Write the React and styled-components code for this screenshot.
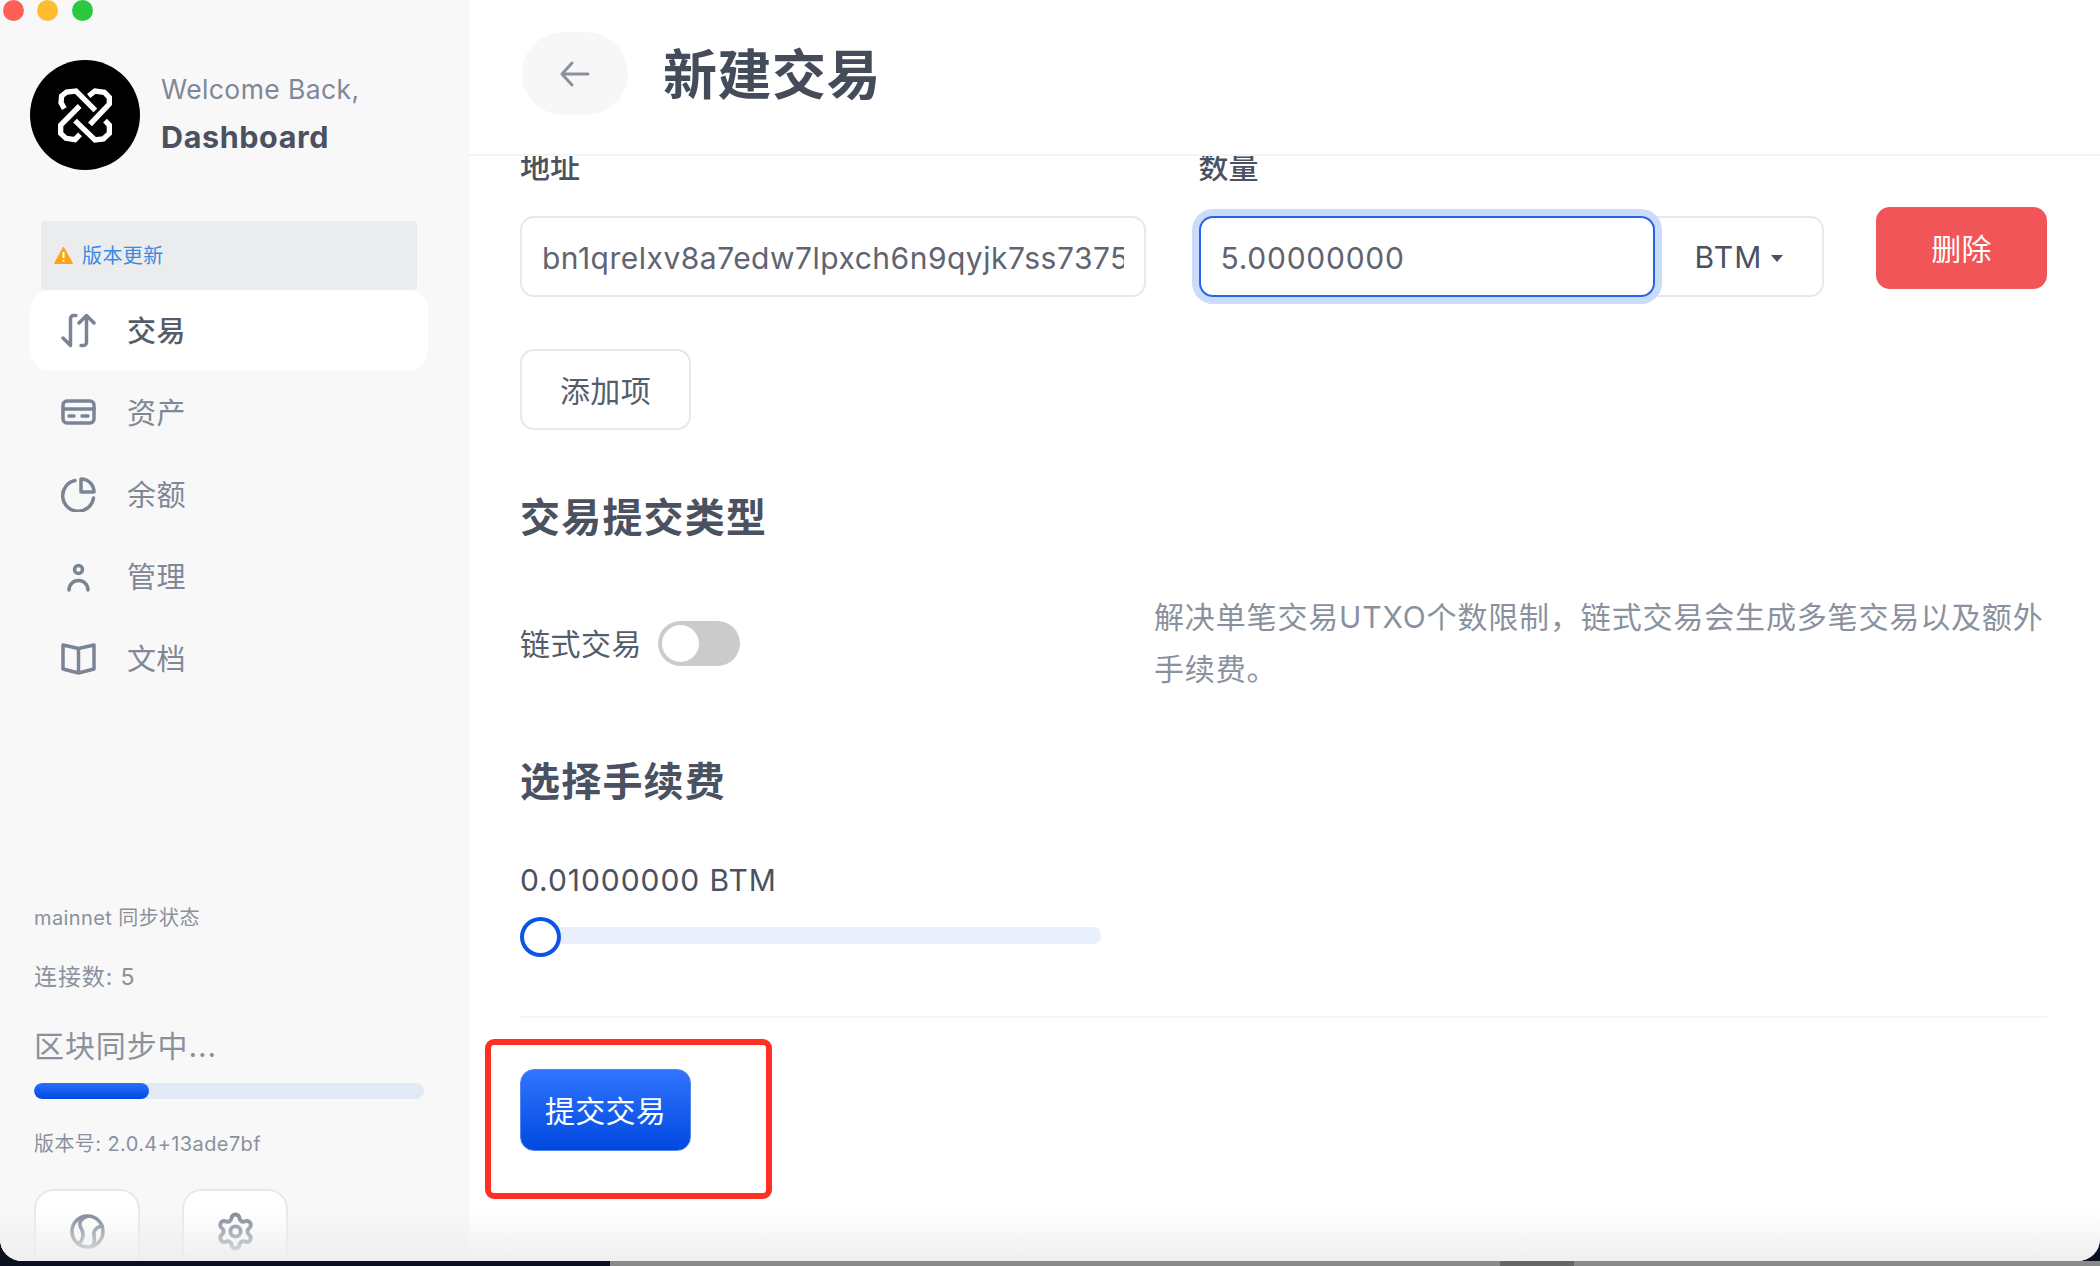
import React from "react";
import styled, { createGlobalStyle } from "styled-components";
import { Settings } from "lucide-react";

const GlobalStyle = createGlobalStyle`
  html, body {
    margin: 0;
    padding: 0;
    background: #0a1020;
  }
  body {
    width: 2100px;
    height: 1266px;
    overflow: hidden;
    font-family: Inter, "Noto Sans CJK SC", sans-serif;
    letter-spacing: 0.025em;
    color: #4a5160;
  }
  * {
    box-sizing: border-box;
  }
`;

const Window = styled.div`
  position: relative;
  display: flex;
  height: 1261px;
  overflow: hidden;
  background: #fff;
  border-radius: 0 0 22px 22px;

  &::after {
    content: "";
    position: absolute;
    left: 0;
    right: 0;
    bottom: 0;
    height: 52px;
    pointer-events: none;
    background: linear-gradient(rgba(238, 238, 238, 0), rgba(238, 238, 238, 0.95));
  }
`;

const Dock = styled.div`
  display: flex;
  height: 5px;
  background: #8a8a8a;
`;

const DockPart = styled.div`
  width: ${(p) => p.$width}px;
  background: ${(p) => p.$color};
`;

const Sidebar = styled.aside`
  flex: 0 0 469px;
  display: flex;
  flex-direction: column;
  background: #f8f8f9;

  & > * {
    flex: none;
  }
`;

const Lights = styled.div`
  display: flex;
  gap: 13.5px;
  margin-left: 2.5px;
`;

const Light = styled.span`
  width: 21px;
  height: 21px;
  border-radius: 50%;
  background: ${(p) => p.$color};
`;

const Brand = styled.div`
  display: flex;
  align-items: center;
  gap: 21px;
  margin: 39px 0 0 30px;
`;

const BrandText = styled.div`
  display: flex;
  flex-direction: column;
  gap: 8px;
  padding-bottom: 4px;
`;

const Welcome = styled.div`
  font-size: 26.5px;
  line-height: 40px;
  color: #7f8896;
`;

const BrandName = styled.div`
  font-size: 30.5px;
  line-height: 40px;
  font-weight: 700;
  letter-spacing: 0.02em;
  color: #4a5160;
`;

const UpdateBanner = styled.div`
  display: flex;
  align-items: center;
  gap: 9px;
  height: 69px;
  margin: 51px 52px 0 41px;
  padding: 0 0 2px 13px;
  border-radius: 4px;
  background: #ebecee;
  font-size: 20px;
  color: #3b8ae0;
`;

const Nav = styled.nav`
  display: flex;
  flex-direction: column;
  gap: 1px;
`;

const NavItem = styled.div`
  display: flex;
  align-items: center;
  gap: 31px;
  height: 81px;
  margin: 0 41px 0 30px;
  padding-left: 31px;
  border-radius: 20px;
  background: ${(p) => (p.$active ? "#fff" : "transparent")};
  color: ${(p) => (p.$active ? "#555c6a" : "#808896")};
  font-size: 29px;
  font-weight: ${(p) => (p.$active ? 500 : 400)};
`;

const NavLabel = styled.span`
  padding-bottom: 4px;
`;

const NavIcon = styled.svg`
  flex: none;
  width: 35px;
  height: 35px;
  fill: none;
  stroke: #7a8494;
  stroke-width: 3.5;
  stroke-linecap: round;
  stroke-linejoin: round;
`;

const StatusBlock = styled.div`
  display: flex;
  flex-direction: column;
  margin: 204px 45px 0 34px;
  color: #8a919e;
`;

const StatusSmall = styled.div`
  font-size: 20px;
  line-height: 30px;
  margin-top: ${(p) => p.$top || 0}px;
`;

const StatusMedium = styled.div`
  font-size: 23px;
  line-height: 30px;
  margin-top: 29px;
  letter-spacing: 0.9px;
`;

const SyncTitle = styled.div`
  font-size: 30px;
  line-height: 40px;
  margin-top: 34px;
  letter-spacing: 0.9px;
`;

const Progress = styled.div`
  height: 16px;
  margin-top: 17px;
  border-radius: 8px;
  overflow: hidden;
  background: #e3e9f5;
`;

const ProgressFill = styled.div`
  height: 100%;
  border-radius: 8px;
  background: linear-gradient(#2a6ffb, #0048e0);
`;

const ToolRow = styled.div`
  display: flex;
  gap: 42px;
  margin: 30px 0 0 34px;
`;

const ToolButton = styled.button`
  display: flex;
  align-items: center;
  justify-content: center;
  flex: none;
  width: 106px;
  height: 84px;
  padding: 0;
  background: #fff;
  border: 2px solid #e9e9ec;
  border-radius: 20px;
  color: #7a8494;
`;

const Main = styled.main`
  position: relative;
  flex: 1;
  display: flex;
  flex-direction: column;
  min-width: 0;
`;

const Header = styled.header`
  flex: 0 0 156px;
  display: flex;
  align-items: flex-start;
  gap: 35px;
  padding: 32px 0 0 53px;
  border-bottom: 2px solid #f5f5f6;
`;

const BackButton = styled.button`
  display: flex;
  align-items: center;
  justify-content: center;
  width: 106px;
  height: 83px;
  padding: 0;
  border: 0;
  border-radius: 44px;
  background: #f7f7f8;
`;

const Title = styled.h1`
  margin: 0;
  font-size: 54px;
  line-height: 88px;
  font-weight: 700;
  letter-spacing: 0.5px;
  color: #454c59;
`;

const Body = styled.div`
  flex: 1;
  overflow: hidden;
  padding: 0 53px 0 51px;
`;

const ItemRow = styled.div`
  display: grid;
  grid-template-columns: 626px 625px 171px;
  column-gap: 52.5px;
`;

const Field = styled.div`
  display: flex;
  flex-direction: column;
`;

const FieldLabel = styled.div`
  height: 24px;
  margin-bottom: 36px;
  font-size: 30px;
  line-height: 22px;
  font-weight: 500;
  letter-spacing: 0;
  color: #4a5160;
`;

const TextInput = styled.input`
  width: 100%;
  height: 81px;
  padding: 2px 20px 0;
  border: 2px solid #e8e8ea;
  border-radius: 14px;
  outline: none;
  background: #fff;
  font: inherit;
  font-size: 30px;
  letter-spacing: 0.5px;
  color: #5f6470;
`;

const AmountGroup = styled.div`
  display: flex;
  height: 81px;
`;

const AmountInput = styled(TextInput)`
  position: relative;
  flex: 0 0 456px;
  width: 456px;
  border-color: #2563eb;
  letter-spacing: 0.75px;
  box-shadow: 0 0 0 7px #cbdcfb;
`;

const UnitSelect = styled.div`
  flex: 1;
  display: flex;
  align-items: center;
  gap: 8px;
  padding-left: 40px;
  border: 2px solid #e8e8ea;
  border-left: 0;
  border-radius: 0 14px 14px 0;
  font-size: 30px;
  letter-spacing: 1.2px;
  color: #4a5160;
`;

const Caret = styled.span`
  width: 0;
  height: 0;
  margin-top: 3px;
  border-left: 6.5px solid transparent;
  border-right: 6.5px solid transparent;
  border-top: 7px solid #4a5160;
`;

const Button = styled.button`
  display: block;
  width: ${(p) => p.$width || 171}px;
  height: 82px;
  padding: 0 0 3px;
  border-radius: 14px;
  font: inherit;
  font-size: 30px;
  letter-spacing: 0.3px;
`;

const DeleteButton = styled(Button)`
  align-self: end;
  margin-bottom: 8px;
  border: 0;
  background: #f25557;
  color: #fff;
`;

const AddButton = styled(Button)`
  margin-top: 52px;
  height: 81px;
  padding-bottom: 1px;
  border: 2px solid #e8e8ea;
  background: #fff;
  color: #555c6a;
`;

const SectionTitle = styled.h2`
  margin: ${(p) => p.$top}px 0 0;
  font-size: 40px;
  line-height: 56px;
  font-weight: 700;
  letter-spacing: 1.2px;
  color: #4a5160;
`;

const ChainRow = styled.div`
  display: grid;
  grid-template-columns: 634px 1fr;
  align-items: center;
  margin-top: 45px;
`;

const ChainSwitch = styled.div`
  display: flex;
  align-items: center;
  gap: 16px;
  font-size: 30px;
  letter-spacing: 0.5px;
  color: #555c6a;
`;

const ChainLabel = styled.span`
  padding-bottom: 3px;
`;

const Toggle = styled.div`
  display: flex;
  align-items: center;
  width: 82px;
  height: 45px;
  padding-left: 4px;
  border-radius: 23px;
  background: #cbcbcb;
`;

const ToggleKnob = styled.div`
  width: 37px;
  height: 37px;
  border-radius: 50%;
  background: #fff;
`;

const HelpText = styled.p`
  margin: 0;
  font-size: 30px;
  line-height: 52px;
  letter-spacing: 0.85px;
  white-space: nowrap;
  color: #8a919e;
`;

const FeeValue = styled.div`
  margin-top: 50px;
  font-size: 30px;
  line-height: 40px;
  letter-spacing: 0.95px;
  color: #4a5160;
`;

const Slider = styled.div`
  position: relative;
  width: 581px;
  height: 40px;
  margin-top: 17px;
  padding-top: 10px;
`;

const SliderTrack = styled.div`
  width: 100%;
  height: 17px;
  border-radius: 8px;
  background: #e9effb;
`;

const SliderThumb = styled.div`
  position: absolute;
  left: 0;
  top: 0;
  width: 41px;
  height: 40px;
  border: 4px solid #0b55e6;
  border-radius: 50%;
  background: #fff;
`;

const Divider = styled.hr`
  height: 2px;
  margin: 59px 0 51px;
  border: 0;
  background: #f5f5f6;
`;

const SubmitButton = styled(Button)`
  border: 1px solid #4f86f0;
  background: linear-gradient(#3074fe, #0048e0);
  color: #fff;
`;

// the red frame is an annotation lying over the screenshot
const Annotation = styled.div`
  position: absolute;
  left: 16px;
  top: 1039px;
  width: 287px;
  height: 160px;
  border: 6px solid #ff3022;
  border-radius: 9px;
  pointer-events: none;
`;

const Logo = () => (
  <svg width="110" height="110" viewBox="-60 -60 330 330" fill="none">
    <circle cx="105" cy="105" r="165" fill="#000" />
    <g stroke="#fff" strokeWidth="16" strokeLinejoin="miter">
      <path d="M43 86 L33 68 L35 48 L50 36 L78 33 L136 91" />
      <path d="M116 48 L135 33 L163 37 L178 52 L178 72 L120 133" />
      <path d="M90 163 L75 179 L48 175 L32 160 L32 135 L89 78" />
      <path d="M165 122 L178 135 L178 160 L160 177 L135 180 L75 122" />
    </g>
  </svg>
);

const WarningIcon = () => (
  <svg width="19" height="18" viewBox="0 0 19 18">
    <path d="M9.5 1 L18.5 17.5 H0.5 Z" fill="#fda50f" stroke="#fda50f" strokeLinejoin="round" />
    <path d="M9.5 6 V12 M9.5 14 V15.5" stroke="#fff" strokeWidth="2" />
  </svg>
);

const TransferIcon = () => (
  <NavIcon viewBox="0 0 35 35">
    <path d="M15 2.5 H12.5 a3 3 0 0 0 -3 3 V32 M2 25 l7.5 7.5" />
    <path d="M20 32.5 H22.5 a3 3 0 0 0 3 -3 V2.5 M18 10 l7.5 -7.5 L33 10" />
  </NavIcon>
);

const CardIcon = () => (
  <NavIcon viewBox="0 0 35 35">
    <rect x="2" y="6" width="31" height="22" rx="4" />
    <path d="M2 14 H33 M8 21 H13 M21 21 H27" />
  </NavIcon>
);

const PieIcon = () => (
  <NavIcon viewBox="0 0 35 35">
    <path d="M14 3.5 A15.5 15.5 0 1 0 32.5 21" />
    <path d="M20 2 A13 13 0 0 1 33 15 H20 Z" />
  </NavIcon>
);

const UserIcon = () => (
  <NavIcon viewBox="0 0 35 35">
    <circle cx="17.5" cy="10.5" r="4" />
    <path d="M8 31 a9.5 9.5 0 0 1 19 0" />
  </NavIcon>
);

const BookIcon = () => (
  <NavIcon viewBox="0 0 35 35">
    <path d="M2 4 L17.5 7.5 L33 4 V28 L17.5 32 L2 28 Z M17.5 7.5 V32" />
  </NavIcon>
);

const BallIcon = () => (
  <NavIcon viewBox="0 0 35 35">
    <circle cx="17.5" cy="17.5" r="15.5" />
    <path d="M17 2.5 C10 5 8 10 11.5 15 C14.5 20 13 26 8.5 30" />
    <path d="M32 12 C26 13 23 17 24 22 C25 26 24 30 22 32.5" />
  </NavIcon>
);

const BackArrow = () => (
  <svg width="30" height="26" viewBox="0 0 30 26" fill="none" stroke="#8a919e" strokeWidth="3" strokeLinecap="round" strokeLinejoin="round">
    <path d="M2 13 H28 M12 2 L2 13 L12 24" />
  </svg>
);

const navItems = [
  { label: "交易", icon: TransferIcon, active: true },
  { label: "资产", icon: CardIcon },
  { label: "余额", icon: PieIcon },
  { label: "管理", icon: UserIcon },
  { label: "文档", icon: BookIcon },
];

const App = () => {
  return (
    <>
      <GlobalStyle />
      <Window>
        <Sidebar>
          <Lights>
            <Light $color="#ff5f57" />
            <Light $color="#febc2e" />
            <Light $color="#2bc840" />
          </Lights>
          <Brand>
            <Logo />
            <BrandText>
              <Welcome>Welcome Back,</Welcome>
              <BrandName>Dashboard</BrandName>
            </BrandText>
          </Brand>
          <UpdateBanner>
            <WarningIcon />
            版本更新
          </UpdateBanner>
          <Nav>
            {navItems.map((item) => (
              <NavItem key={item.label} $active={item.active}>
                <item.icon />
                <NavLabel>{item.label}</NavLabel>
              </NavItem>
            ))}
          </Nav>
          <StatusBlock>
            <StatusSmall>mainnet 同步状态</StatusSmall>
            <StatusMedium>连接数: 5</StatusMedium>
            <SyncTitle>区块同步中...</SyncTitle>
            <Progress>
              <ProgressFill style={{ width: "29.5%" }} />
            </Progress>
            <StatusSmall $top={30}>版本号: 2.0.4+13ade7bf</StatusSmall>
          </StatusBlock>
          <ToolRow>
            <ToolButton>
              <BallIcon />
            </ToolButton>
            <ToolButton>
              <Settings size={41} strokeWidth={2.3} />
            </ToolButton>
          </ToolRow>
        </Sidebar>
        <Main>
          <Header>
            <BackButton>
              <BackArrow />
            </BackButton>
            <Title>新建交易</Title>
          </Header>
          <Body>
            <ItemRow>
              <Field>
                <FieldLabel>地址</FieldLabel>
                <TextInput readOnly value="bn1qrelxv8a7edw7lpxch6n9qyjk7ss7375xk2j9" />
              </Field>
              <Field>
                <FieldLabel>数量</FieldLabel>
                <AmountGroup>
                  <AmountInput readOnly value="5.00000000" />
                  <UnitSelect>
                    BTM
                    <Caret />
                  </UnitSelect>
                </AmountGroup>
              </Field>
              <DeleteButton>删除</DeleteButton>
            </ItemRow>
            <AddButton $width={171}>添加项</AddButton>
            <SectionTitle $top={60}>交易提交类型</SectionTitle>
            <ChainRow>
              <ChainSwitch>
                <ChainLabel>链式交易</ChainLabel>
                <Toggle>
                  <ToggleKnob />
                </Toggle>
              </ChainSwitch>
              <HelpText>
                解决单笔交易UTXO个数限制，链式交易会生成多笔交易以及额外
                <br />
                手续费。
              </HelpText>
            </ChainRow>
            <SectionTitle $top={59}>选择手续费</SectionTitle>
            <FeeValue>0.01000000 BTM</FeeValue>
            <Slider>
              <SliderTrack />
              <SliderThumb />
            </Slider>
            <Divider />
            <SubmitButton>提交交易</SubmitButton>
          </Body>
          <Annotation />
        </Main>
      </Window>
      <Dock>
        <DockPart $width={610} $color="#0a1020" />
        <DockPart $width={890} $color="#8a8a8a" />
        <DockPart $width={74} $color="#666" />
      </Dock>
    </>
  );
};

export default App;
